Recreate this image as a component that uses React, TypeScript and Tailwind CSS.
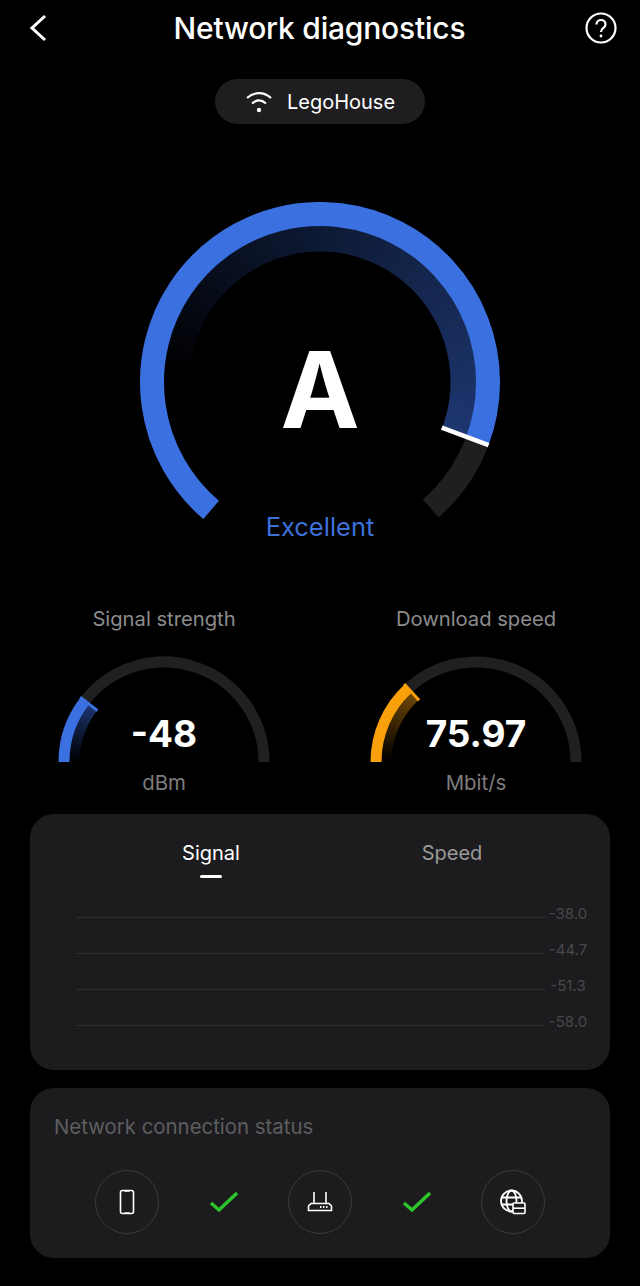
import { Fragment } from 'react';

const pt = (cx: number, cy: number, r: number, deg: number) => {
  const a = (deg * Math.PI) / 180;
  return [cx + r * Math.sin(a), cy - r * Math.cos(a)];
};

const arc = (cx: number, cy: number, r: number, from: number, to: number) => {
  const [x1, y1] = pt(cx, cy, r, from);
  const [x2, y2] = pt(cx, cy, r, to);
  const large = to - from > 180 ? 1 : 0;
  return `M${x1} ${y1}A${r} ${r} 0 ${large} 1 ${x2} ${y2}`;
};

// sweep fade, drawn as short arcs since svg has no conic gradient
const Fade = ({
  cx,
  cy,
  r,
  width,
  from,
  to,
  rgb,
  power = 1,
}: {
  cx: number;
  cy: number;
  r: number;
  width: number;
  from: number;
  to: number;
  rgb: number[];
  power?: number;
}) => {
  const steps = 80;
  const step = (to - from) / steps;
  return (
    <>
      {Array.from({ length: steps }, (_, i) => {
        const k = Math.pow((i + 1) / steps, power);
        const color = `rgb(${rgb.map((c) => Math.round(c * k)).join(',')})`;
        return (
          <path
            key={i}
            d={arc(cx, cy, r, from + i * step, from + (i + 1) * step + 0.4)}
            fill="none"
            stroke={color}
            strokeWidth={width}
          />
        );
      })}
    </>
  );
};

const MainGauge = () => {
  const start = -139.6;
  const end = 138.8;
  const tick = 110.5;
  const [x1, y1] = pt(180, 180, 130, tick);
  const [x2, y2] = pt(180, 180, 180, tick);
  return (
    <svg width="360" height="340" viewBox="0 0 360 340" className="block">
      <Fade cx={180} cy={180} r={143.5} width={26} from={-85} to={tick} rgb={[29, 54, 110]} power={0.9} />
      <path d={arc(180, 180, 168, tick, end)} fill="none" stroke="#1f1f1f" strokeWidth={24} />
      <path d={arc(180, 180, 168, start, tick)} fill="none" stroke="#3a70e0" strokeWidth={24} />
      <path d={`M${x1} ${y1}L${x2} ${y2}`} stroke="#ffffff" strokeWidth={4.5} />
    </svg>
  );
};

const SmallGauge = ({ tick, color, rgb }: { tick: number; color: string; rgb: number[] }) => {
  const [x1, y1] = pt(106, 106, 84, tick);
  const [x2, y2] = pt(106, 106, 106, tick);
  return (
    <svg width="212" height="107" viewBox="0 0 212 107" className="block">
      <path d={arc(106, 106, 100, tick, 90)} fill="none" stroke="#202020" strokeWidth={11} />
      <Fade cx={106} cy={106} r={89.5} width={10} from={-90} to={tick} rgb={rgb} />
      <path d={arc(106, 106, 100, -90, tick)} fill="none" stroke={color} strokeWidth={11} />
      <path d={`M${x1} ${y1}L${x2} ${y2}`} stroke={color} strokeWidth={3} />
    </svg>
  );
};

const Metric = ({
  label,
  value,
  unit,
  tick,
  color,
  rgb,
}: {
  label: string;
  value: string;
  unit: string;
  tick: number;
  color: string;
  rgb: number[];
}) => (
  <div className="w-[212px] flex flex-col items-center">
    <div className="text-[20.2px] leading-[28px] text-[#8c8c8c]">{label}</div>
    <div className="relative mt-[23px]">
      <SmallGauge tick={tick} color={color} rgb={rgb} />
      <div className="absolute left-0 right-0 top-[55px] text-center text-[37px] leading-[46px] font-bold text-white">
        {value}
      </div>
    </div>
    <div className="mt-[6px] text-[20.4px] leading-[28px] text-[#7c7c7c]">{unit}</div>
  </div>
);

const Check = () => (
  <svg width="32" height="32" viewBox="0 0 32 32">
    <path d="M3 17L11 24L29 7" fill="none" stroke="#2cc52c" strokeWidth="3.5" />
  </svg>
);

const Circle = ({ children }: { children: React.ReactNode }) => (
  <div className="w-[64px] h-[64px] rounded-full border border-[#3a3a3a] flex items-center justify-center">
    {children}
  </div>
);

const rows = ['-38.0', '-44.7', '-51.3', '-58.0'];

export default function App() {
  return (
    <div className="w-[640px] h-[1286px] bg-black overflow-hidden font-['Inter',sans-serif]">
      <div className="h-[56px] pl-[28px] pr-[23px] flex items-center justify-between">
        <svg width="20" height="28" viewBox="0 0 20 28">
          <path d="M17 2L4 14L17 26" fill="none" stroke="#ffffff" strokeWidth="3" />
        </svg>
        <div className="ml-[6px] text-[30px] leading-[36px] font-medium text-white tracking-[-0.2px]">Network diagnostics</div>
        <svg width="32" height="32" viewBox="0 0 32 32" fill="none" stroke="#ffffff">
          <circle cx="16" cy="16" r="14.5" strokeWidth="2.2" />
          <path d="M11.5 12.5C11.5 6.5 20.5 6.5 20.5 12.5C20.5 16 16 16 16 20" strokeWidth="2.2" />
          <circle cx="16" cy="24" r="1.4" fill="#ffffff" stroke="none" />
        </svg>
      </div>

      <div className="mt-[23px] flex justify-center">
        <div className="w-[210px] h-[45px] rounded-full bg-[#1e1e20] flex items-center justify-center gap-[14px]">
          <svg width="28" height="24" viewBox="0 0 28 24" fill="none" stroke="#ffffff" strokeWidth="2.2">
            <path d="M2 8C9 1.5 19 1.5 26 8" />
            <path d="M7 13.5C11.5 9.5 16.5 9.5 21 13.5" />
            <circle cx="14" cy="20" r="2.2" fill="#ffffff" stroke="none" />
          </svg>
          <span className="text-[20px] leading-[28px] text-white">LegoHouse</span>
        </div>
      </div>

      <div className="mt-[78px] flex justify-center">
        <div className="relative w-[360px] h-[340px]">
          <MainGauge />
          <div className="absolute left-0 right-0 top-[123px] text-center text-[106px] leading-[130px] font-bold text-white">
            A
          </div>
          <div className="absolute left-0 right-0 top-[308px] text-center text-[25.5px] leading-[34px] text-[#3d70d8]">
            Excellent
          </div>
        </div>
      </div>

      <div className="mt-[63px] pl-[58px] pr-[58px] flex justify-between">
        <Metric label="Signal strength" value="-48" unit="dBm" tick={-52.3} color="#3a70e0" rgb={[29, 54, 110]} />
        <Metric label="Download speed" value="75.97" unit="Mbit/s" tick={-42.7} color="#f9a00a" rgb={[110, 72, 8]} />
      </div>

      <div className="mx-[30px] mt-[17px] h-[256px] rounded-[24px] bg-[#1c1c1e] relative">
        <div className="pt-[25px] pl-[122px] flex">
          <div className="w-[118px] flex flex-col items-center">
            <span className="text-[20px] leading-[28px] text-white">Signal</span>
            <span className="mt-[8px] w-[22px] h-[3px] rounded-full bg-white" />
          </div>
          <div className="ml-[123px] w-[118px] text-center text-[20px] leading-[28px] text-[#9a9a9a]">Speed</div>
        </div>
        <div className="mt-[19px] pl-[46px] pr-[20px] flex flex-col">
          {rows.map((r) => (
            <Fragment key={r}>
              <div className="h-[36px] flex items-center gap-[1px]">
                <div className="flex-1 h-px bg-[#2e2e30] mt-[5px]" />
                <div className="w-[44px] text-center text-[15px] leading-[20px] text-[#48484a] mb-[2px]">{r}</div>
              </div>
            </Fragment>
          ))}
        </div>
      </div>

      <div className="mx-[30px] mt-[18px] h-[170px] rounded-[24px] bg-[#1c1c1e] px-[24px] pt-[25px]">
        <div className="text-[20.4px] leading-[28px] text-[#5e5e60]">Network connection status</div>
        <div className="mt-[29px] pl-[41px] flex items-center">
          <Circle>
            <svg width="16" height="26" viewBox="0 0 16 26" fill="none" stroke="#ffffff" strokeWidth="1.6">
              <rect x="1.5" y="1.5" width="13" height="23" rx="2" />
              <path d="M5.5 2H10.5M5.5 24H10.5" />
            </svg>
          </Circle>
          <div className="w-[129px] flex justify-center">
            <Check />
          </div>
          <Circle>
            <svg width="26" height="24" viewBox="0 0 26 24" fill="none" stroke="#ffffff" strokeWidth="1.6">
              <path d="M4 13.5L1.5 16V20.5H24.5V16L22 13.5Z" />
              <path d="M7 13.5V2M19 13.5V2" />
              <path d="M13 17H14.5M16 17H17.5M19 17H20.5" strokeWidth="1.8" />
            </svg>
          </Circle>
          <div className="w-[129px] flex justify-center">
            <Check />
          </div>
          <Circle>
            <svg width="28" height="28" viewBox="0 0 28 28" fill="none" stroke="#ffffff" strokeWidth="1.8">
              <circle cx="12.5" cy="13" r="10.5" />
              <ellipse cx="12.5" cy="13" rx="5" ry="10.5" />
              <path d="M2.5 9.5H22.5M2.5 16.5H22.5" />
              <rect x="14" y="15" width="12" height="10.5" rx="1" fill="#1c1c1e" strokeWidth="1.6" />
              <path d="M14 20.2H26" strokeWidth="1.6" />
            </svg>
          </Circle>
        </div>
      </div>
    </div>
  );
}
